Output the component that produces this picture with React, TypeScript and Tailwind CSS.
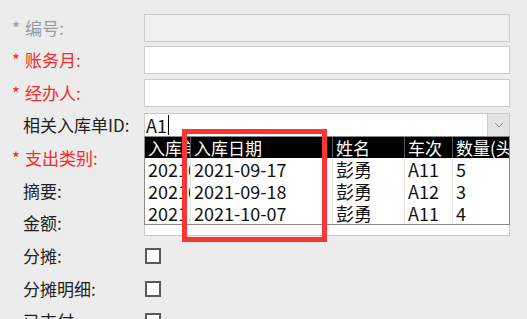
import React from 'react';

type Row = { id: string; date: string; name: string; car: string; qty: string };

const rows: Row[] = [
  { id: '2021091701', date: '2021-09-17', name: '彭勇', car: 'A11', qty: '5' },
  { id: '2021091801', date: '2021-09-18', name: '彭勇', car: 'A12', qty: '3' },
  { id: '2021100701', date: '2021-10-07', name: '彭勇', car: 'A11', qty: '4' },
];

const font = { fontFamily: '"Noto Sans CJK SC", "Noto Sans", sans-serif' };

function Label({ text, required, muted }: { text: string; required?: boolean; muted?: boolean }) {
  if (required) {
    return (
      <div className={`w-[144px] shrink-0 pl-[12px] text-[17px] whitespace-nowrap ${muted ? 'text-[#9a9a9a]' : 'text-[#f52a2a]'}`}>
        <span className="mr-[5px]">*</span>
        {text}
      </div>
    );
  }
  return <div className="w-[144px] shrink-0 pl-[23px] text-[17px] text-[#222] whitespace-nowrap">{text}</div>;
}

function TextBox({ disabled, h = 'h-[28px]' }: { disabled?: boolean; h?: string }) {
  return (
    <div className={`w-[366px] ${h} border border-[#cbcbcb] ${disabled ? 'bg-[#efefef]' : 'bg-white'}`} />
  );
}

function CheckBox() {
  return <div className="ml-[1px] w-[16px] h-[16px] border-2 border-[#5a5a5a] bg-white" />;
}

function Dropdown() {
  const cell = 'pl-[3px] overflow-hidden whitespace-nowrap';
  return (
    <div className="absolute left-[-1px] top-[22px] w-[366px] border border-[#8a8a8a] bg-white z-10">
      <div className="grid grid-cols-[45px_142px_72px_48px_1fr] h-[21px] bg-black text-white text-[17px] leading-[21px]">
        <div className={cell}>入库单ID</div>
        <div className={`${cell} border-l border-[#555]`}>入库日期</div>
        <div className={`${cell} border-l border-[#555]`}>姓名</div>
        <div className={`${cell} border-l border-[#555]`}>车次</div>
        <div className={`${cell} border-l border-[#555]`}>数量(头)</div>
      </div>
      {rows.map((r) => (
        <div key={r.id} className="grid grid-cols-[45px_142px_72px_48px_1fr] h-[22px] text-[18px] leading-[22px] text-[#111]">
          <div className={cell}>{r.id}</div>
          <div className={`${cell} border-l border-[#e2e2e2]`}>{r.date}</div>
          <div className={`${cell} border-l border-[#e2e2e2]`}>{r.name}</div>
          <div className={`${cell} border-l border-[#e2e2e2]`}>{r.car}</div>
          <div className={`${cell} border-l border-[#e2e2e2]`}>{r.qty}</div>
        </div>
      ))}
    </div>
  );
}

export default function App() {
  return (
    <div className="relative w-[527px] h-[319px] overflow-hidden bg-[#ececec]" style={font}>
      <div className="flex flex-col pt-[12px]">
        <div className="flex items-center h-[32px]">
          <Label text="编号:" required muted />
          <TextBox disabled />
        </div>
        <div className="flex items-center h-[32px]">
          <Label text="账务月:" required />
          <TextBox />
        </div>
        <div className="flex items-center h-[33px]">
          <Label text="经办人:" required />
          <TextBox />
        </div>
        <div className="flex items-center h-[32px]">
          <Label text="相关入库单ID:" />
          <div className="relative flex w-[366px] h-[24px] border border-[#cbcbcb] bg-white">
            <div className="flex-1 flex items-center pl-[1px] text-[18px] text-[#111]">
              A1
              <span className="ml-[1px] w-[1px] h-[20px] bg-black" />
            </div>
            <div className="w-[22px] h-full bg-[#e3e3e3] border-l border-[#cbcbcb] flex items-center justify-center">
              <svg width="10" height="6" viewBox="0 0 10 6">
                <polyline points="1,1 5,5 9,1" fill="none" stroke="#8a8a8a" strokeWidth="1" />
              </svg>
            </div>
            <Dropdown />
          </div>
        </div>
        <div className="flex items-center h-[33px]">
          <Label text="支出类别:" required />
          <TextBox />
        </div>
        <div className="flex items-center h-[33px]">
          <Label text="摘要:" />
          <TextBox />
        </div>
        <div className="flex items-center h-[32px]">
          <Label text="金额:" />
          <TextBox h="h-[26px]" />
        </div>
        <div className="flex items-center h-[33px]">
          <Label text="分摊:" />
          <CheckBox />
        </div>
        <div className="flex items-center h-[33px]">
          <Label text="分摊明细:" />
          <CheckBox />
        </div>
        <div className="flex items-center h-[32px]">
          <Label text="已支付:" />
          <CheckBox />
        </div>
      </div>
      {/* annotation box */}
      <div className="absolute left-[182px] top-[129px] w-[145px] h-[113px] border-[5px] border-[#fb3535] z-20" />
    </div>
  );
}
